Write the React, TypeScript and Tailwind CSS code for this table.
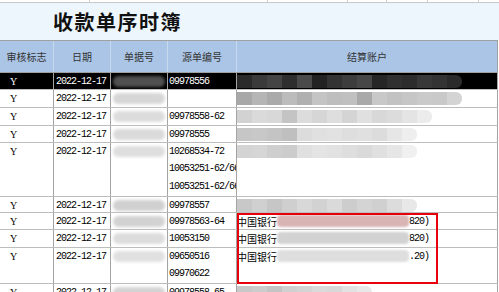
import React from 'react';

const mono = "font-['Liberation_Mono',monospace] text-[10px] tracking-[-1px]";
const cjk = "font-['Noto_Sans_CJK_SC',sans-serif] text-[10px]";

interface Row {
  date: string;
  src: string[];
  h: string;
  sel?: boolean;
  blob: string;
  acct: React.ReactNode;
}

function Mosaic({ cells, w = 'w-[15px]', h = 'h-[13px]' }: { cells: string[]; w?: string; h?: string }) {
  return (
    <div className="flex blur-[0.6px]">
      {cells.map((c, i) => (
        <div key={i} className={`${w} ${h} ${c} ${i === cells.length - 1 ? 'rounded-r-md' : ''}`} />
      ))}
    </div>
  );
}

function Bank({ tone, tail }: { tone: string; tail: string }) {
  return (
    <div className="flex items-center">
      <span className={`${cjk} text-black`}>中国银行</span>
      <div className={`w-[132px] h-[12px] rounded-sm blur-[1.2px] ${tone}`} />
      <span className={`${mono} text-black`}>{tail}</span>
    </div>
  );
}

const rows: Row[] = [
  {
    date: '2022-12-17', src: ['09978556'], h: 'h-[17px]', sel: true,
    blob: 'bg-[#505050]',
    acct: <Mosaic cells={['bg-[#2a2a2a]', 'bg-[#3a3a3a]', 'bg-[#444]', 'bg-[#2e2e2e]', 'bg-[#4a4a4a]', 'bg-[#222]', 'bg-[#333]', 'bg-[#3d3d3d]', 'bg-[#474747]', 'bg-[#262626]', 'bg-[#303030]', 'bg-[#2c2c2c]', 'bg-[#383838]', 'bg-[#333]', 'bg-[#2a2a2a]']} />,
  },
  {
    date: '2022-12-17', src: [''], h: 'h-[18px]', blob: 'bg-[#d6d6d6]',
    acct: <Mosaic cells={['bg-[#a8a8a8]', 'bg-[#b5b5b5]', 'bg-[#aaa]', 'bg-[#bcbcbc]', 'bg-[#b0b0b0]', 'bg-[#c4c4c4]', 'bg-[#bebebe]', 'bg-[#c0c0c0]', 'bg-[#a9a9a9]', 'bg-[#c8c8c8]', 'bg-[#c2c2c2]', 'bg-[#c6c6c6]', 'bg-[#cacaca]', 'bg-[#c9c9c9]', 'bg-[#d4d4d4]']} />,
  },
  {
    date: '2022-12-17', src: ['09978558-62'], h: 'h-[18px]', blob: 'bg-[#dcdcdc]',
    acct: <Mosaic cells={['bg-[#d2d2d2]', 'bg-[#dadada]', 'bg-[#d8d8d8]', 'bg-[#c4c4c4]', 'bg-[#dcdcdc]', 'bg-[#d6d6d6]', 'bg-[#dedede]', 'bg-[#d4d4d4]', 'bg-[#e0e0e0]', 'bg-[#d8d8d8]', 'bg-[#dcdcdc]', 'bg-[#e4e4e4]', 'bg-[#ececec]']} />,
  },
  {
    date: '2022-12-17', src: ['09978555'], h: 'h-[17px]', blob: 'bg-[#dadada]',
    acct: <Mosaic cells={['bg-[#c6c6c6]', 'bg-[#c8c8c8]', 'bg-[#c4c4c4]', 'bg-[#bfbfbf]', 'bg-[#dcdcdc]', 'bg-[#e0e0e0]', 'bg-[#e2e2e2]', 'bg-[#dedede]', 'bg-[#e0e0e0]', 'bg-[#dcdcdc]', 'bg-[#e6e6e6]', 'bg-[#eeeeee]']} />,
  },
  {
    date: '2022-12-17', src: ['10268534-72', '10053251-62/66', '10053251-62/66'], h: 'h-[54px]', blob: 'bg-[#dedede]',
    acct: <Mosaic cells={['bg-[#d4d4d4]', 'bg-[#d6d6d6]', 'bg-[#cfcfcf]', 'bg-[#cccccc]', 'bg-[#e0e0e0]', 'bg-[#e4e4e4]', 'bg-[#e2e2e2]', 'bg-[#dedede]', 'bg-[#dadada]', 'bg-[#e0e0e0]', 'bg-[#e6e6e6]', 'bg-[#f0f0f0]']} />,
  },
  {
    date: '2022-12-17', src: ['09978557'], h: 'h-[16px]', blob: 'bg-[#d0d0d0]',
    acct: <Mosaic cells={['bg-[#c8c8c8]', 'bg-[#d0d0d0]', 'bg-[#c6c6c6]', 'bg-[#cfcfcf]', 'bg-[#d8d8d8]', 'bg-[#d2d2d2]', 'bg-[#dadada]', 'bg-[#cdcdcd]', 'bg-[#d4d4d4]', 'bg-[#d0d0d0]', 'bg-[#dcdcdc]', 'bg-[#e8e8e8]']} />,
  },
  {
    date: '2022-12-17', src: ['09978563-64'], h: 'h-[17px]', blob: 'bg-[#d2d2d2]',
    acct: <Bank tone="bg-[#d9b4b4]" tail="820)" />,
  },
  {
    date: '2022-12-17', src: ['10053150'], h: 'h-[18px]', blob: 'bg-[#dcdcdc]',
    acct: <Bank tone="bg-[#d2d2d2]" tail="820)" />,
  },
  {
    date: '2022-12-17', src: ['09650516', '09970622'], h: 'h-[36px]', blob: 'bg-[#e0e0e0]',
    acct: <Bank tone="bg-[#dedede]" tail=".20)" />,
  },
  {
    date: '2022-12-17', src: ['09978558-65'], h: 'h-[18px]', blob: 'bg-[#d4d4d4]',
    acct: <Mosaic cells={['bg-[#c8c8c8]', 'bg-[#cccccc]', 'bg-[#c4c4c4]', 'bg-[#d0d0d0]', 'bg-[#d4d4d4]', 'bg-[#dadada]', 'bg-[#d8d8d8]', 'bg-[#e2e2e2]', 'bg-[#e8e8e8]']} />,
  },
];

const cols = 'grid grid-cols-[54px_57px_57px_69px_261px]';

export default function App() {
  return (
    <div className="w-[499px] h-[292px] overflow-hidden bg-white">
      {/* top strip of the grid behind */}
      <div className="flex h-[3px] border-b border-[#c8c8c8]">
        <div className="w-[90px] border-r border-[#d0d0d0]" />
        <div className="w-[178px] border-r border-[#d0d0d0]" />
        <div className="w-[80px] border-r border-[#d0d0d0]" />
        <div className="w-[39px] border-r border-[#d0d0d0]" />
        <div className="w-[41px] border-r border-[#d0d0d0]" />
        <div className="w-[51px] border-r border-[#d0d0d0]" />
      </div>

      <div className="h-[37px] bg-[#eef6fd] flex items-center pl-[53px]">
        <h1 className="font-['Noto_Sans_CJK_SC',sans-serif] text-[20px] font-bold tracking-[1.5px] text-[#111] leading-none">
          收款单序时簿
        </h1>
      </div>

      <div className="relative w-[498px]">
        <div className={`${cols} h-[33px] bg-[#aac5e6] border-y border-[#a0a0a0] ${cjk} text-[#333]`}>
          {['审核标志', '日期', '单据号', '源单编号', '结算账户'].map((t, i) => (
            <div key={t} className={`flex items-center justify-center ${i < 4 ? 'border-r border-[#c9d9ee]' : 'border-r border-[#a0a0a0]'}`}>
              {t}
            </div>
          ))}
        </div>

        {rows.map((r, i) => {
          const tx = r.sel ? 'text-white' : 'text-black';
          const cell = `border-r border-[#a4a4a4] overflow-hidden whitespace-nowrap`;
          return (
            <div key={i} className={`${cols} ${r.h} border-b border-[#bdbdbd] ${r.sel ? 'bg-black' : 'bg-white'}`}>
              <div className={`${cell} pl-[10px] font-['Liberation_Serif',serif] text-[10px] ${tx}`}>
                <div className="h-[16px] flex items-center">Y</div>
              </div>
              <div className={`${cell} pl-[2px] ${mono} ${tx}`}>
                <div className="h-[16px] flex items-center">{r.date}</div>
              </div>
              <div className={`${cell} pl-[2px]`}>
                <div className="h-[16px] flex items-center">
                  <div className={`w-[52px] h-[11px] rounded-full blur-[1.5px] ${r.blob}`} />
                </div>
              </div>
              <div className={`${cell} pl-[1px] ${mono} ${tx}`}>
                {r.src.map((s, j) => (
                  <div key={j} className="h-[18px] first:h-[16px] flex items-center">{s}</div>
                ))}
              </div>
              <div className={`${cell}`}>
                <div className="h-[16px] flex items-center">{r.acct}</div>
              </div>
            </div>
          );
        })}

        <div className="absolute left-[237px] top-[173px] w-[201px] h-[71px] border-2 border-solid border-red-600" />
      </div>
    </div>
  );
}
